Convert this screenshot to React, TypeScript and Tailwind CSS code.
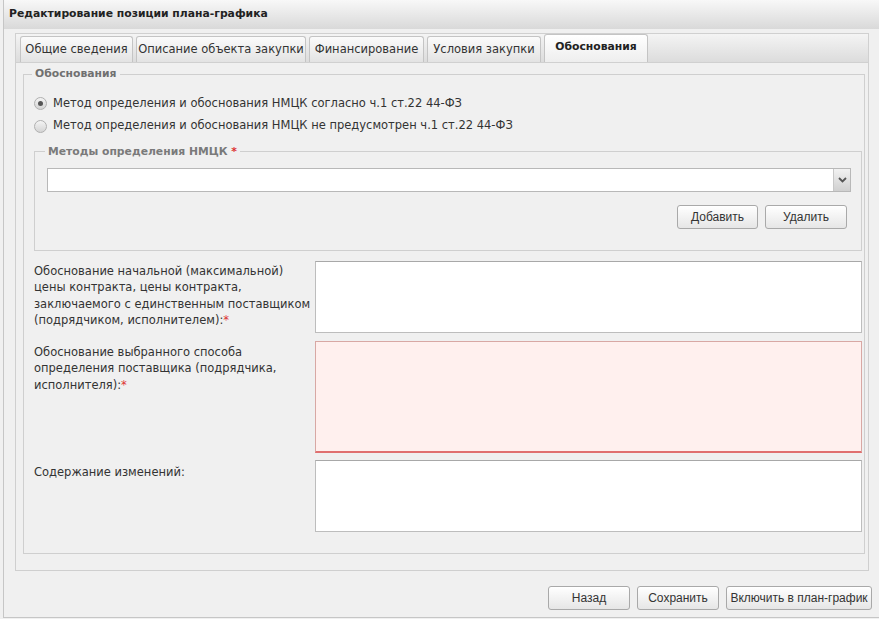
import React from "react"

const tabs = [
  { label: "Общие сведения", w: "w-[113px]" },
  { label: "Описание объекта закупки", w: "w-[170px]" },
  { label: "Финансирование", w: "w-[115px]" },
  { label: "Условия закупки", w: "w-[114px]" },
]

const Btn = ({ children, className = "" }: { children: React.ReactNode; className?: string }) => (
  <button
    className={`h-[24px] whitespace-nowrap rounded-[3px] border border-[#a9a9a9] bg-gradient-to-b from-[#ffffff] to-[#e6e6e6] text-[12px] text-[#333] shadow-[inset_0_1px_0_#fff] [font-family:'Liberation_Sans',Arial,sans-serif] ${className}`}
  >
    {children}
  </button>
)

const Radio = ({ checked }: { checked?: boolean }) => (
  <span className="flex h-[13px] w-[13px] items-center justify-center rounded-full border border-[#b0b0b0] bg-gradient-to-b from-[#f4f4f4] to-[#d4d4d4]">
    {checked && <span className="h-[5px] w-[5px] rounded-full bg-[#555]" />}
  </span>
)

const Req = () => <span className="text-[#d33]">*</span>

export default function App() {
  return (
    <div className="relative h-[619px] w-[879px] overflow-hidden bg-[#f0f0f0] text-[11.5px] text-[#333] [font-family:'DejaVu_Sans',Verdana,sans-serif]">
      <div className="ml-[3px] flex h-[618px] flex-col border-b border-l border-[#c6c6c6]">
        {/* header */}
        <div className="flex h-[29px] items-center bg-gradient-to-b from-[#f8f8f8] to-[#d9d9d9] pl-[5px] text-[10.8px] font-bold text-[#222]">
          Редактирование позиции плана-графика
        </div>

        <div className="ml-[11px] mt-[4px] w-[854px]">
          {/* tab strip */}
          <div className="flex h-[30px] items-end gap-[3px] border border-[#d0d0d0] bg-gradient-to-b from-[#f4f4f4] to-[#dcdcdc] pl-[4px]">
            {tabs.map((t) => (
              <div
                key={t.label}
                className={`flex h-[26px] items-center justify-center whitespace-nowrap rounded-t-[3px] border border-b-0 border-[#c4c4c4] bg-gradient-to-b from-[#fbfbfb] to-[#e3e3e3] text-[11.5px] text-[#333] ${t.w}`}
              >
                {t.label}
              </div>
            ))}
            <div className="flex h-[28px] w-[104px] items-center justify-center whitespace-nowrap rounded-t-[3px] border border-b-0 border-[#c4c4c4] bg-gradient-to-b from-[#ffffff] to-[#eeeeee] pb-[2px] text-[10.8px] font-bold text-[#222]">
              Обоснования
            </div>
          </div>

          {/* tab body */}
          <div className="h-[508px] border border-t-0 border-[#cfcfcf] pl-[7px] pr-[3px] pt-[3px]">
            <fieldset className="h-[488px] border border-[#cfcfcf] pl-[10px] pr-[2px]">
              <legend className="-ml-[2px] px-[3px] text-[10.8px] font-bold text-[#707070]">Обоснования</legend>

              <div className="mt-[13px] flex items-center gap-[6px]">
                <Radio checked />
                <span>Метод определения и обоснования НМЦК согласно ч.1 ст.22 44-ФЗ</span>
              </div>
              <div className="mt-[5px] flex items-center gap-[6px]">
                <Radio />
                <span>Метод определения и обоснования НМЦК не предусмотрен ч.1 ст.22 44-ФЗ</span>
              </div>

              <fieldset className="mt-[9px] h-[107px] border border-[#cfcfcf] pl-[12px] pr-[10px]">
                <legend className="-ml-[2px] px-[3px] text-[10.8px] font-bold text-[#7a7a7a]">
                  Методы определения НМЦК <Req />
                </legend>
                <div className="mt-[8px] flex h-[24px] border border-[#b8b8b8] bg-white">
                  <div className="flex-1" />
                  <div className="flex w-[17px] items-center justify-center border-l border-[#c8c8c8] bg-gradient-to-b from-[#f2f2f2] to-[#d0d0d0]">
                    <svg width="9" height="6" viewBox="0 0 9 6">
                      <path d="M1 1 L4.5 4.5 L8 1" fill="none" stroke="#555" strokeWidth="1.8" />
                    </svg>
                  </div>
                </div>
                <div className="mt-[13px] flex justify-end gap-[7px] pr-[4px]">
                  <Btn className="w-[81px]">Добавить</Btn>
                  <Btn className="w-[82px]">Удалить</Btn>
                </div>
              </fieldset>

              <div className="mt-[10px] flex">
                <div className="w-[281px] pt-[2px] leading-[16.5px]">
                  Обоснование начальной (максимальной) цены контракта, цены контракта, заключаемого с единственным поставщиком (подрядчиком, исполнителем):<Req />
                </div>
                <div className="h-[72px] flex-1 border border-[#bdbdbd] border-t-[#a8a8a8] bg-white" />
              </div>
              <div className="mt-[8px] flex">
                <div className="w-[281px] pt-[3px] leading-[16.5px]">
                  Обоснование выбранного способа определения поставщика (подрядчика, исполнителя):<Req />
                </div>
                <div className="h-[112px] flex-1 border border-b-2 border-[#d8a8a4] border-b-[#e07070] border-b-dotted bg-[#fff0ee]" />
              </div>
              <div className="mt-[7px] flex">
                <div className="w-[281px] pt-[4px] leading-[16.5px]">Содержание изменений:</div>
                <div className="h-[72px] flex-1 border border-[#bdbdbd] border-t-[#a8a8a8] bg-white" />
              </div>
            </fieldset>
          </div>
        </div>

        {/* footer */}
        <div className="mt-[15px] flex justify-end gap-[7px] pr-[7px]">
          <Btn className="w-[82px]">Назад</Btn>
          <Btn className="w-[82px]">Сохранить</Btn>
          <Btn className="w-[146px]">Включить в план-график</Btn>
        </div>
      </div>
    </div>
  )
}
